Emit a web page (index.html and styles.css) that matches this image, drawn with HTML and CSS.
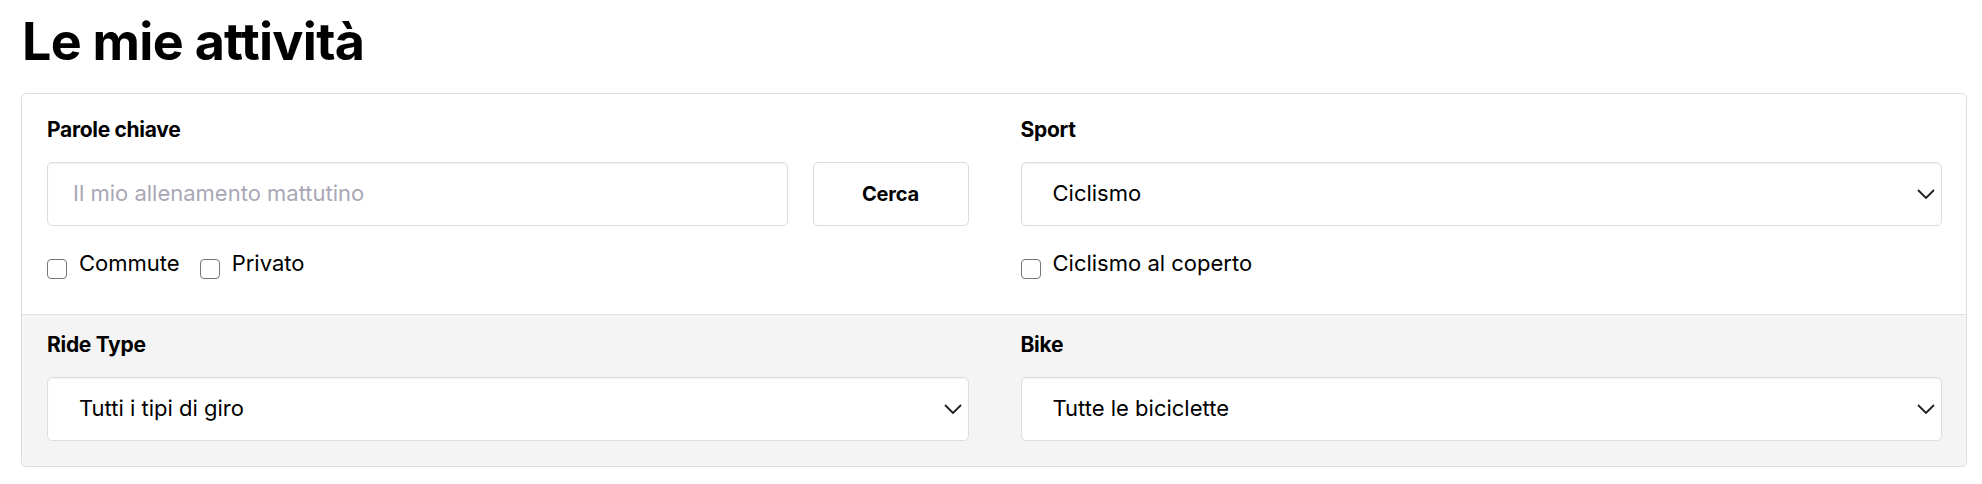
FILE: index.html
```html
<!DOCTYPE html>
<html lang="it">
<head>
<meta charset="utf-8">
<title>Le mie attività</title>
<link rel="stylesheet" href="styles.css">
</head>
<body>
<h1 class="page-title">Le mie attività</h1>
<form class="filters">
  <div class="section section-top">
    <div class="field">
      <label class="field-label" for="kw">Parole chiave</label>
      <div class="search-row">
        <input id="kw" class="text-input" type="text" placeholder="Il mio allenamento mattutino">
        <button type="button" class="btn">Cerca</button>
      </div>
      <div class="checks">
        <label class="check"><input type="checkbox" class="box"><span>Commute</span></label>
        <label class="check"><input type="checkbox" class="box"><span>Privato</span></label>
      </div>
    </div>
    <div class="field">
      <label class="field-label" for="sport">Sport</label>
      <div class="select-wrap">
        <select id="sport" class="select"><option>Ciclismo</option></select>
        <svg class="chev" viewBox="0 0 18 10" width="18" height="10"><path d="M1 1 L9 9 L17 1" fill="none" stroke="#1f1f1f" stroke-width="1.8"/></svg>
      </div>
      <div class="checks">
        <label class="check"><input type="checkbox" class="box"><span>Ciclismo al coperto</span></label>
      </div>
    </div>
  </div>
  <div class="section section-bottom">
    <div class="field">
      <label class="field-label" for="ride">Ride Type</label>
      <div class="select-wrap">
        <select id="ride" class="select"><option>Tutti i tipi di giro</option></select>
        <svg class="chev" viewBox="0 0 18 10" width="18" height="10"><path d="M1 1 L9 9 L17 1" fill="none" stroke="#1f1f1f" stroke-width="1.8"/></svg>
      </div>
    </div>
    <div class="field">
      <label class="field-label" for="bike">Bike</label>
      <div class="select-wrap">
        <select id="bike" class="select"><option>Tutte le biciclette</option></select>
        <svg class="chev" viewBox="0 0 18 10" width="18" height="10"><path d="M1 1 L9 9 L17 1" fill="none" stroke="#1f1f1f" stroke-width="1.8"/></svg>
      </div>
    </div>
  </div>
</form>
</body>
</html>
```
FILE: styles.css
```css
* { box-sizing: border-box; }
html, body { background: #fff; }
body {
  margin: 0 15px 0 21px;
  font-family: Inter, "Liberation Sans", sans-serif;
  color: #000;
}
.page-title {
  margin: 11px 0 20px 1px;
  font-size: 52px;
  line-height: 62px;
  font-weight: 700;
  letter-spacing: -0.7px;
}
.filters {
  border: 1px solid #dedede;
  border-radius: 5px;
  box-shadow: 0 1px 2px rgba(0,0,0,0.06);
  overflow: hidden;
}
.section {
  display: grid;
  grid-template-columns: 1fr 1fr;
  column-gap: 52px;
  padding: 24px 24px 35px 25px;
}
.section-bottom {
  background: #f4f4f4;
  border-top: 1px solid #e2e2e2;
  padding: 18px 24px 25px 25px;
}
.field { display: flex; flex-direction: column; }
.field-label {
  font-size: 21px;
  line-height: 24px;
  font-weight: 700;
  margin-bottom: 20px;
  letter-spacing: -0.3px;
}
.search-row { display: flex; gap: 25px; }
.text-input, .select {
  height: 64px;
  border: 1px solid #dcdce1;
  border-radius: 5px;
  background: #fff;
  font-family: inherit;
  font-size: 22px;
  color: #000;
  box-shadow: inset 0 1px 2px rgba(0,0,0,0.06);
  outline: none;
  padding-bottom: 3px;
}
.text-input {
  flex: 1;
  padding-left: 25px;
  padding-right: 25px;
}
.text-input::placeholder { color: #a9a7b6; }
.btn {
  width: 156px;
  height: 64px;
  border: 1px solid #dcdce1;
  border-radius: 5px;
  background: #fff;
  font-family: inherit;
  font-size: 20px;
  font-weight: 700;
  color: #000;
  letter-spacing: -0.2px;
}
.select-wrap { position: relative; }
.select {
  width: 100%;
  appearance: none;
  -webkit-appearance: none;
  padding-left: 31px;
  padding-right: 40px;
}
.chev {
  position: absolute;
  right: 7px;
  top: 27px;
  pointer-events: none;
}
.checks {
  display: flex;
  gap: 20px;
  margin-top: 23px;
}
.check {
  display: flex;
  align-items: flex-start;
  gap: 12px;
  font-size: 22px;
  line-height: 28px;
}
.box {
  appearance: none;
  -webkit-appearance: none;
  width: 20px;
  height: 20px;
  margin: 10px 0 0 0;
  border: 1.5px solid #777;
  border-radius: 4px;
  background: #fff;
  flex: none;
}
```
